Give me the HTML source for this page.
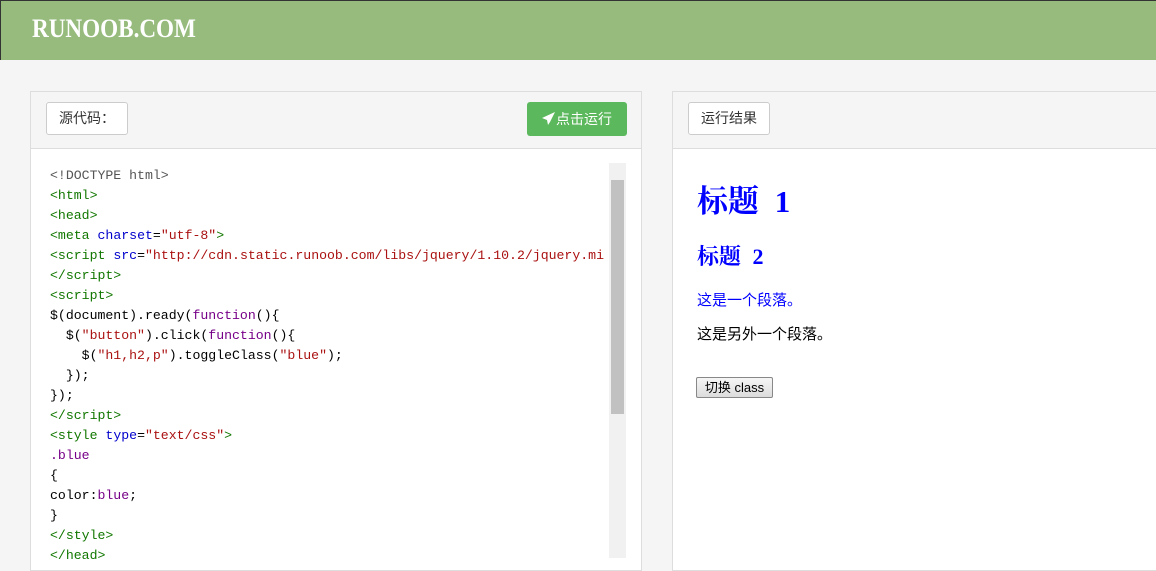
<!DOCTYPE html>
<html><head><meta charset="utf-8"><style>
body{margin:0;width:1156px;height:558px;overflow:hidden;background:#f5f5f5;font-family:"Liberation Sans","Noto Sans CJK SC",sans-serif;position:relative}
.hdr{position:absolute;left:0;top:0;width:1156px;height:60px;background:#96bb7c;border-top:1px solid #333;border-left:1px solid #333;box-sizing:border-box}
.logo{position:absolute;left:31px;top:13px;color:#fff;font:bold 26px "Liberation Serif",serif;transform:scaleX(0.89);transform-origin:left;white-space:nowrap}
.panel{position:absolute;top:91px;background:#fff;border:1px solid #ddd;box-sizing:border-box}
.ph{height:56px;background:#f5f5f5;border-bottom:1px solid #ddd;position:relative}
.code{position:relative;height:420px}
.btn{position:absolute;top:10px;height:33px;background:#fff;border:1px solid #ccc;border-radius:3px;box-sizing:border-box;font-size:14px;line-height:31px;padding:0 12px;color:#333}
.run{position:absolute;right:14px;top:10px;height:34px;width:100px;background:#5cb85c;border-radius:3px;color:#fff;font-size:14px;line-height:34px;text-align:center}
pre{margin:0;position:absolute;left:19px;top:17px;font:13.2px/20px "Liberation Mono","Noto Sans CJK SC",monospace;color:#000;white-space:pre}
.t{color:#170}.a{color:#00c}.s{color:#a11}.k{color:#708}.m{color:#555}
.sb{position:absolute;left:578px;top:14px;width:17px;height:395px;background:#f1f1f1}
.th{position:absolute;left:2px;top:17px;width:13px;height:234px;background:#c1c1c1}
</style></head><body>
<div class="hdr"><div class="logo">RUNOOB.COM</div></div>
<div class="panel" style="left:30px;width:612px;height:480px">
 <div class="ph"><div class="btn" style="left:15px">源代码：</div><div class="run"><svg width="14" height="13" viewBox="0 0 14 13" style="vertical-align:-1px"><path d="M13 0L0 6l5 2 1 5 2-3z" fill="#fff"/></svg>点击运行</div></div>
 <div class="code">
 <pre><span class="m">&lt;!DOCTYPE html&gt;</span>
<span class="t">&lt;html&gt;</span>
<span class="t">&lt;head&gt;</span>
<span class="t">&lt;meta</span> <span class="a">charset</span>=<span class="s">"utf-8"</span><span class="t">&gt;</span>
<span class="t">&lt;script</span> <span class="a">src</span>=<span class="s">"http://cdn.static.runoob.com/libs/jquery/1.10.2/jquery.mi</span>
<span class="t">&lt;/script&gt;</span>
<span class="t">&lt;script&gt;</span>
$(document).ready(<span class="k">function</span>(){
  $(<span class="s">"button"</span>).click(<span class="k">function</span>(){
    $(<span class="s">"h1,h2,p"</span>).toggleClass(<span class="s">"blue"</span>);
  });
});
<span class="t">&lt;/script&gt;</span>
<span class="t">&lt;style</span> <span class="a">type</span>=<span class="s">"text/css"</span><span class="t">&gt;</span>
<span class="k">.blue</span>
{
color:<span class="k">blue</span>;
}
<span class="t">&lt;/style&gt;</span>
<span class="t">&lt;/head&gt;</span></pre>
 <div class="sb"><div class="th"></div></div>
 </div>
</div>
<div class="panel" style="left:672px;width:500px;height:480px">
 <div class="ph"><div class="btn" style="left:15px">运行结果</div></div>
 <div style="position:absolute;left:24px;top:90px;font:bold 31px 'Liberation Serif','Noto Serif CJK SC',serif;color:#00f;line-height:40px;word-spacing:8px">标题 1</div>
 <div style="position:absolute;left:24px;top:150px;font:bold 22px 'Liberation Serif','Noto Serif CJK SC',serif;color:#00f;line-height:30px;word-spacing:6px">标题 2</div>
 <div style="position:absolute;left:24px;top:197px;font-size:15px;color:#00f">这是一个段落。</div>
 <div style="position:absolute;left:24px;top:231px;font-size:15px;color:#000">这是另外一个段落。</div>
 <div style="position:absolute;left:23px;top:285px;width:77px;height:21px;box-sizing:border-box;border:1px solid #888;border-radius:2px;background:linear-gradient(#f6f6f6,#dcdcdc);font-size:13px;line-height:19px;text-align:center">切换 class</div>
</div>
</body></html>
